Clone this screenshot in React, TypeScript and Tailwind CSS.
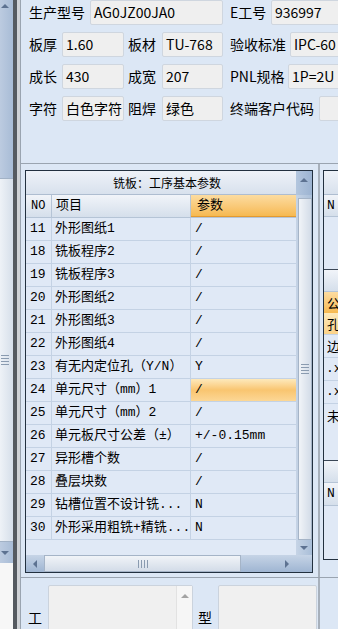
import React from "react";

const rows: [string, string, string][] = [
  ["11", "外形图纸1", "/"],
  ["18", "铣板程序2", "/"],
  ["19", "铣板程序3", "/"],
  ["20", "外形图纸2", "/"],
  ["21", "外形图纸3", "/"],
  ["22", "外形图纸4", "/"],
  ["23", "有无内定位孔（Y/N）", "Y"],
  ["24", "单元尺寸（mm）1", "/"],
  ["25", "单元尺寸（mm）2", "/"],
  ["26", "单元板尺寸公差（±）", "+/-0.15mm"],
  ["27", "异形槽个数", "/"],
  ["28", "叠层块数", "/"],
  ["29", "钻槽位置不设计铣...", "N"],
  ["30", "外形采用粗铣+精铣...", "N"],
];

function Label({ w, pl, children }: { w: string; pl: string; children: React.ReactNode }) {
  return (
    <div className={`${w} ${pl} shrink-0 h-full flex items-center text-[14px] text-black whitespace-nowrap`}>
      {children}
    </div>
  );
}

function Input({ w, children }: { w: string; children?: React.ReactNode }) {
  return (
    <div
      className={`${w} shrink-0 h-full bg-[#efefef] border border-[#cfd6df] rounded-[2px] flex items-center pl-[3px] text-[14px] text-black whitespace-nowrap overflow-hidden`}
    >
      {children}
    </div>
  );
}

function UpTri({ color = "border-b-[#5d7291]" }: { color?: string }) {
  return <div className={`w-0 h-0 border-l-[4px] border-r-[4px] border-b-[4px] border-l-transparent border-r-transparent ${color}`} />;
}
function DownTri({ color = "border-t-[#5d7291]" }: { color?: string }) {
  return <div className={`w-0 h-0 border-l-[4px] border-r-[4px] border-t-[4px] border-l-transparent border-r-transparent ${color}`} />;
}
function LeftTri() {
  return <div className="w-0 h-0 border-t-[4px] border-b-[4px] border-r-[4px] border-t-transparent border-b-transparent border-r-[#5d7291]" />;
}
function RightTri() {
  return <div className="w-0 h-0 border-t-[4px] border-b-[4px] border-l-[4px] border-t-transparent border-b-transparent border-l-[#5d7291]" />;
}

function HGrip() {
  return (
    <div className="flex flex-col gap-[2px]">
      <div className="w-[8px] h-[1px] bg-[#8a9bb0]" />
      <div className="w-[8px] h-[1px] bg-[#8a9bb0]" />
      <div className="w-[8px] h-[1px] bg-[#8a9bb0]" />
      <div className="w-[8px] h-[1px] bg-[#8a9bb0]" />
    </div>
  );
}
function VGrip() {
  return (
    <div className="flex flex-row gap-[2px]">
      <div className="h-[8px] w-[1px] bg-[#8a9bb0]" />
      <div className="h-[8px] w-[1px] bg-[#8a9bb0]" />
      <div className="h-[8px] w-[1px] bg-[#8a9bb0]" />
      <div className="h-[8px] w-[1px] bg-[#8a9bb0]" />
    </div>
  );
}

const cellFont = "font-['Liberation_Mono','Noto_Sans_CJK_SC',monospace] text-[13px]";

export default function App() {
  return (
    <div className="w-[338px] h-[629px] overflow-hidden flex bg-white font-['Noto_Sans_CJK_SC',sans-serif] text-black">
      {/* left scrollbar strip */}
      <div className="w-[13px] h-full shrink-0 flex flex-col">
        <div className="h-[178px] bg-gradient-to-r from-[#bccbe0] to-[#a8bcd6] flex justify-center pt-[4px] pr-[3px]">
          <UpTri />
        </div>
        <div className="h-[364px] bg-gradient-to-r from-[#eef2f7] to-[#d6dfea] border-y border-[#a2b2c6] flex items-center pl-[1px]">
          <HGrip />
        </div>
        <div className="h-[21px] bg-gradient-to-r from-[#bccbe0] to-[#a8bcd6] flex justify-center items-center pr-[3px]">
          <DownTri />
        </div>
        <div className="flex-1 bg-[#f7f7f7]" />
      </div>
      <div className="w-[4px] h-full shrink-0 bg-[#555a60]" />
      <div className="w-[3px] h-full shrink-0 bg-[#cfd2d6]" />
      <div className="w-[1px] h-full shrink-0 bg-[#9aa4b0]" />

      {/* main area */}
      <div className="w-[317px] h-full shrink-0 flex flex-col bg-[#dce7f5]">
        {/* top form */}
        <div className="h-[164px] shrink-0 border-b border-[#9aa4b0] flex flex-col gap-[7px] overflow-hidden">
          <div className="h-[25px] flex">
            <Label w="w-[69px]" pl="pl-[8px]">生产型号</Label>
            <Input w="w-[133px]">AG0JZ00JA0</Input>
            <Label w="w-[48px]" pl="pl-[7px]">E工号</Label>
            <Input w="w-[80px]">936997</Input>
          </div>
          <div className="h-[25px] flex">
            <Label w="w-[41px]" pl="pl-[8px]">板厚</Label>
            <Input w="w-[62px]">1.60</Input>
            <Label w="w-[38px]" pl="pl-[4px]">板材</Label>
            <Input w="w-[61px]">TU-768</Input>
            <Label w="w-[67px]" pl="pl-[7px]">验收标准</Label>
            <Input w="w-[60px]">IPC-60</Input>
          </div>
          <div className="h-[25px] flex">
            <Label w="w-[41px]" pl="pl-[8px]">成长</Label>
            <Input w="w-[62px]">430</Input>
            <Label w="w-[38px]" pl="pl-[4px]">成宽</Label>
            <Input w="w-[61px]">207</Input>
            <Label w="w-[65px]" pl="pl-[7px]">PNL规格</Label>
            <Input w="w-[60px]">1P=2U</Input>
          </div>
          <div className="h-[25px] flex">
            <Label w="w-[41px]" pl="pl-[8px]">字符</Label>
            <Input w="w-[62px]">白色字符</Input>
            <Label w="w-[38px]" pl="pl-[4px]">阻焊</Label>
            <Input w="w-[61px]">绿色</Input>
            <Label w="w-[96px]" pl="pl-[7px]">终端客户代码</Label>
            <Input w="w-[40px]" />
          </div>
        </div>

        {/* middle */}
        <div className="h-[414px] shrink-0 flex border-b border-[#9aa4b0]">
          <div className="w-[297px] shrink-0 pl-[4px] pr-[5px] pt-[6px]">
            <div className="w-[288px] h-[403px] border border-[#22303f] flex flex-col bg-[#e0e9f6]">
              <div className="h-[384px] flex">
                {/* table body */}
                <div className="w-[270px] flex flex-col">
                  <div className="h-[24px] shrink-0 bg-gradient-to-b from-[#eef2f8] to-[#d8e1ed] border-b border-[#aebdd0] flex items-center justify-center pl-[12px] text-[12px] font-['Noto_Sans_CJK_SC',sans-serif]">
                    铣板：工序基本参数
                  </div>
                  <div className={`h-[23px] shrink-0 flex border-b border-[#b5c4d6] ${cellFont}`}>
                    <div className="w-[26px] shrink-0 bg-gradient-to-b from-[#f1f4f9] to-[#d5dfeb] border-r border-[#b5c4d6] flex items-center pl-[5px] text-[12px]">NO</div>
                    <div className="w-[139px] shrink-0 bg-gradient-to-b from-[#f1f4f9] to-[#d5dfeb] border-r border-[#b5c4d6] flex items-center pl-[4px]">项目</div>
                    <div className="w-[105px] shrink-0 bg-gradient-to-b from-[#fcdca0] to-[#f6b950] border-b border-[#e39a30] flex items-center pl-[6px]">参数</div>
                  </div>
                  {rows.map(([no, item, val]) => {
                    const hl = no === "24";
                    return (
                      <div key={no} className={`h-[23px] shrink-0 flex border-b border-[#c4d2e4] ${cellFont}`}>
                        <div className="w-[26px] shrink-0 border-r border-[#c4d2e4] flex items-center pl-[4px]">{no}</div>
                        <div className="w-[139px] shrink-0 border-r border-[#c4d2e4] flex items-center pl-[3px] whitespace-nowrap overflow-hidden">{item}</div>
                        <div
                          className={`w-[105px] shrink-0 flex items-center pl-[4px] whitespace-nowrap overflow-hidden ${
                            hl ? "bg-gradient-to-b from-[#fde9bb] via-[#f9c570] to-[#fcd795]" : ""
                          }`}
                        >
                          {val}
                        </div>
                      </div>
                    );
                  })}
                  <div className="flex-1" />
                </div>
                {/* vertical scrollbar */}
                <div className="w-[16px] shrink-0 flex flex-col bg-gradient-to-r from-[#c6d4e6] to-[#a9bed8]">
                  <div className="h-[24px] shrink-0 bg-gradient-to-r from-[#b3c6de] to-[#9cb3d1] flex justify-center pt-[7px]">
                    <UpTri />
                  </div>
                  <div className="h-[3px] shrink-0" />
                  <div className="h-[342px] shrink-0 ml-[2px] bg-gradient-to-r from-[#f1f4f8] to-[#d3dce8] border border-[#a5b4c7] flex items-center justify-center">
                    <HGrip />
                  </div>
                  <div className="flex-1 flex justify-center items-center">
                    <DownTri />
                  </div>
                </div>
              </div>
              {/* horizontal scrollbar */}
              <div className="h-[17px] shrink-0 flex bg-gradient-to-b from-[#c6d4e6] to-[#9fb5d2]">
                <div className="w-[18px] shrink-0 flex items-center justify-center">
                  <LeftTri />
                </div>
                <div className="w-[197px] shrink-0 bg-gradient-to-b from-[#f1f4f8] to-[#d3dce8] border border-[#a5b4c7] flex items-center justify-center">
                  <VGrip />
                </div>
                <div className="w-[37px] shrink-0" />
                <div className="w-[18px] shrink-0 flex items-center justify-center">
                  <RightTri />
                </div>
                <div className="w-[16px] shrink-0" />
              </div>
            </div>
          </div>
          <div className="w-[2px] shrink-0 bg-[#a7b0bb]" />
          {/* right partial panel */}
          <div className="w-[18px] shrink-0 pl-[3px] pt-[6px] overflow-hidden">
            <div className="w-[30px] h-[390px] border border-[#22303f] bg-[#e0e9f6] flex flex-col text-[13px] overflow-hidden">
              <div className="h-[24px] shrink-0 bg-gradient-to-b from-[#eef2f8] to-[#d8e1ed] border-b border-[#aebdd0]" />
              <div className={`h-[22px] shrink-0 bg-gradient-to-b from-[#f1f4f9] to-[#d5dfeb] border-b border-[#b5c4d6] flex items-center pl-[3px] ${cellFont}`}>N</div>
              <div className="h-[53px] shrink-0 border-b border-[#3a4656]" />
              <div className="h-[22px] shrink-0 bg-gradient-to-b from-[#f1f4f9] to-[#d5dfeb] border-b border-[#b5c4d6]" />
              <div className="h-[21px] shrink-0 bg-gradient-to-b from-[#fcdca0] to-[#f6b950] flex items-center pl-[3px]">公</div>
              <div className="h-[22px] shrink-0 bg-gradient-to-b from-[#fde9bb] to-[#fbd38a] border-b border-[#c4d2e4] flex items-center pl-[3px]">孔</div>
              <div className="h-[23px] shrink-0 border-b border-[#c4d2e4] flex items-center pl-[3px]">边</div>
              <div className={`h-[23px] shrink-0 border-b border-[#c4d2e4] flex items-center pl-[2px] ${cellFont}`}>.x</div>
              <div className={`h-[23px] shrink-0 border-b border-[#c4d2e4] flex items-center pl-[2px] ${cellFont}`}>.x</div>
              <div className="h-[23px] shrink-0 flex items-center pl-[3px]">未</div>
              <div className="h-[34px] shrink-0 border-b border-[#3a4656]" />
              <div className="h-[22px] shrink-0 bg-gradient-to-b from-[#f1f4f9] to-[#d5dfeb] border-b border-[#b5c4d6]" />
              <div className={`h-[23px] shrink-0 bg-gradient-to-b from-[#f1f4f9] to-[#d5dfeb] border-b border-[#b5c4d6] flex items-center pl-[3px] ${cellFont}`}>N</div>
              <div className="flex-1" />
            </div>
          </div>
        </div>

        {/* bottom */}
        <div className="flex-1 flex overflow-hidden">
          <div className="w-[27px] shrink-0 pl-[7px] pt-[29px] text-[14px]">工</div>
          <div className="w-[145px] h-[60px] shrink-0 mt-[7px] bg-[#f0f0f0] border border-[#cbd3dd] rounded-[2px] flex justify-end">
            <div className="w-[16px] h-full bg-[#f6f6f6] border-l border-[#e2e2e2] flex justify-center pt-[8px]">
              <UpTri color="border-b-[#a3a3a3]" />
            </div>
          </div>
          <div className="w-[25px] shrink-0 pl-[5px] pt-[29px] text-[14px]">型</div>
          <div className="w-[99px] h-[60px] shrink-0 mt-[7px] bg-[#f0f0f0] border border-[#cbd3dd] rounded-[2px]" />
          <div className="w-[1px] shrink-0" />
          <div className="w-[2px] shrink-0 bg-[#a7b0bb]" />
          <div className="flex-1" />
        </div>
      </div>
    </div>
  );
}
